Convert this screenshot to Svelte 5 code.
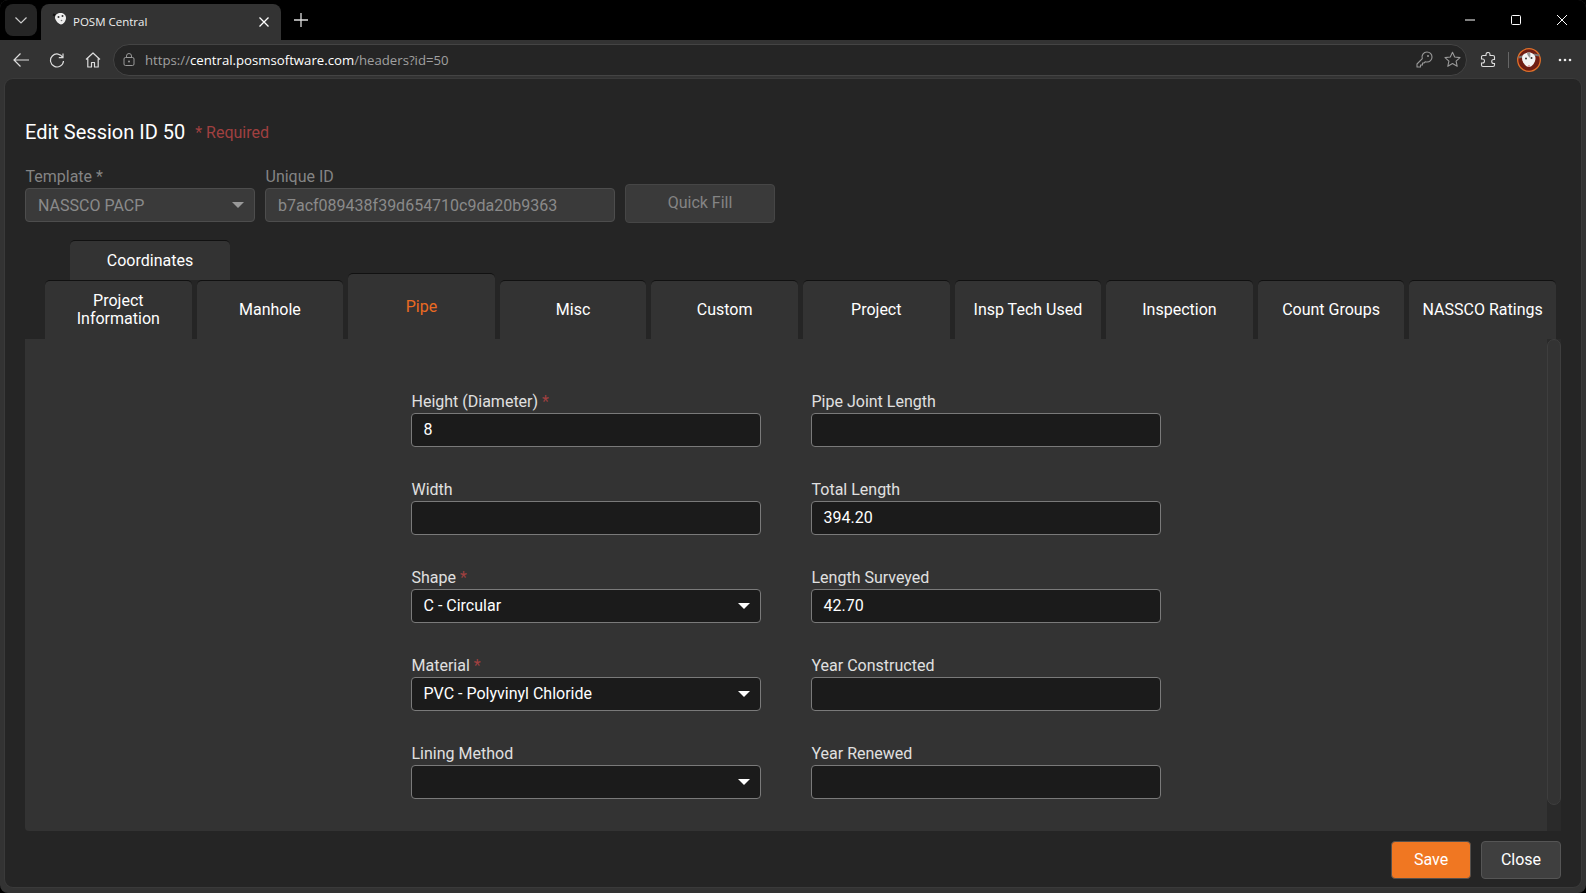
<script>
  const topTabs = ['Project Information', 'Manhole', 'Pipe', 'Misc', 'Custom', 'Project', 'Insp Tech Used', 'Inspection', 'Count Groups', 'NASSCO Ratings'];
  const fields = [
    { label: 'Height (Diameter)', req: true, value: '8' },
    { label: 'Pipe Joint Length', value: '' },
    { label: 'Width', value: '' },
    { label: 'Total Length', value: '394.20' },
    { label: 'Shape', req: true, value: 'C - Circular', select: true },
    { label: 'Length Surveyed', value: '42.70' },
    { label: 'Material', req: true, value: 'PVC - Polyvinyl Chloride', select: true },
    { label: 'Year Constructed', value: '' },
    { label: 'Lining Method', value: '', select: true },
    { label: 'Year Renewed', value: '' }
  ];
</script>

<div class="window">
  <div class="strip">
    <button class="group" aria-label="Tab actions">
      <svg width="14" height="14" viewBox="0 0 14 14"><path d="M1.5 4.5 7 10l5.5-5.5" class="ln" /></svg>
    </button>
    <div class="tab">
      <svg class="fav" width="16" height="16" viewBox="0 0 16 16">
        <path d="M1 2.500l4 1.500" stroke="#111" stroke-width="2" />
        <path d="M3 5.500C3 2.500 5.500 1 8.500 1S14 3 14 6c0 3-3 6.500-5 6.500S3 8.500 3 5.500Z" fill="#eee" />
        <circle cx="6.500" cy="5" r="1" fill="#333" /><circle cx="10.500" cy="4" r="1" fill="#333" /><circle cx="9.500" cy="8.500" r=".8" fill="#777" />
      </svg>
      <span class="tabtitle">POSM Central</span>
      <svg class="tabx" width="12" height="12" viewBox="0 0 12 12"><path d="M1.500 1.500l9 9m0-9l-9 9" stroke="#fff" stroke-width="1.300" fill="none" /></svg>
    </div>
    <svg class="plus" width="16" height="16" viewBox="0 0 16 16"><path d="M8 1v14M1 8h14" stroke="#ddd" stroke-width="1.300" fill="none" /></svg>
    <div class="winctl">
      <svg width="12" height="12" viewBox="0 0 12 12"><path d="M1 6h10" stroke="#fff" fill="none" /></svg>
      <svg width="12" height="12" viewBox="0 0 12 12"><rect x="1.500" y="1.500" width="9" height="9" rx="1" stroke="#fff" fill="none" /></svg>
      <svg width="12" height="12" viewBox="0 0 12 12"><path d="M1 1l10 10m0-10L1 11" stroke="#fff" fill="none" /></svg>
    </div>
  </div>

  <div class="toolbar">
    <div class="navbtn"><svg width="18" height="16" viewBox="0 0 18 16"><path d="M17 8H2M8.500 1.500 2 8l6.500 6.500" stroke="#ddd" stroke-width="1.200" fill="none" /></svg></div>
    <div class="navbtn"><svg width="16" height="16" viewBox="0 0 16 16"><path d="M13.800 5.500A6.500 6.500 0 1 0 14.500 9M14 1.500v4.200h-4.200" stroke="#ddd" stroke-width="1.200" fill="none" /></svg></div>
    <div class="navbtn"><svg width="16" height="16" viewBox="0 0 16 16"><path d="M1 7.500 8 1l7 6.500M2.800 6.500V15h3.700v-4.500h3V15h3.700V6.500" stroke="#ddd" stroke-width="1.200" fill="none" stroke-linejoin="round" /></svg></div>
    <div class="addr">
      <svg class="lock" width="12" height="13" viewBox="0 0 12 13"><rect x="1" y="4.500" width="10" height="8" rx="1.500" stroke="#999" fill="none" /><path d="M3.500 4.500V3a2.500 2.500 0 0 1 5 0v1.500" stroke="#999" fill="none" /><circle cx="6" cy="8.500" r="1" fill="#999" /></svg>
      <span class="url"><span class="dim">https://</span>central.posmsoftware.com<span class="dim">/headers?id=50</span></span>
      <svg class="key" width="17" height="17" viewBox="0 0 17 17"><path d="M11 1a5 5 0 0 1 0 10c-.6 0-1.100-.1-1.600-.3L8 12H6.500v2H4.500v2H1v-3l5.300-5.300A5 5 0 0 1 11 1Z" stroke="#999" stroke-width="1.100" fill="none" stroke-linejoin="round" /><circle cx="12" cy="5" r="1" fill="#999" /></svg>
      <svg class="star" width="17" height="17" viewBox="0 0 17 17"><path d="M8.500 1.200 10.700 6l5.300.6-3.900 3.500 1.100 5.200-4.700-2.700-4.700 2.700 1.100-5.200L1 6.600 6.300 6Z" stroke="#999" stroke-width="1.100" fill="none" stroke-linejoin="round" /></svg>
    </div>
    <div class="navbtn ext"><svg width="16" height="16" viewBox="0 0 16 16"><path d="M6 2.500a2 2 0 0 1 4 0V3.500h3a1.500 1.500 0 0 1 1.500 1.500v2.500h-.8a2 2 0 0 0 0 4h.8V13a1.500 1.500 0 0 1-1.500 1.500H3A1.500 1.500 0 0 1 1.500 13v-2h1a2 2 0 0 0 0-4h-1V5A1.500 1.500 0 0 1 3 3.500h3Z" stroke="#ddd" stroke-width="1.100" fill="none" /></svg></div>
    <span class="divider"></span>
    <svg class="avatar" width="24" height="24" viewBox="0 0 24 24">
      <circle cx="12" cy="12" r="11.300" fill="#6f1d13" stroke="#e0702a" stroke-width="1.300" />
      <path d="M1.500 9.500l6-1.500M22.500 7.500l-6-1" stroke="#777" stroke-width="2.200" />
      <path d="M5 10c0-3.500 3.500-5.500 7-5.500s6.500 2.500 6.500 5.500c0 4.500-3.500 9-6.500 9s-7-4.500-7-9Z" fill="#f4f4f4" />
      <path d="M10 5c.5 2 1 3.500 3 5 .5-2 .5-4 0-5.500Z" fill="#999" />
      <circle cx="9" cy="10.500" r="1" fill="#333" /><circle cx="14.500" cy="10" r="1" fill="#333" /><circle cx="12" cy="18" r="1" fill="#d99" />
    </svg>
    <svg class="dots" width="14" height="4" viewBox="0 0 14 4"><circle cx="2" cy="2" r="1.300" fill="#eee" /><circle cx="7" cy="2" r="1.300" fill="#eee" /><circle cx="12" cy="2" r="1.300" fill="#eee" /></svg>
  </div>

  <main class="page">
    <h1 class="title">Edit Session ID 50 <span class="required">* Required</span></h1>

    <div class="top-form">
      <div class="tf tf-template">
        <span class="tf-label">Template *</span>
        <div class="tf-box">NASSCO PACP<span class="caret off"></span></div>
      </div>
      <div class="tf tf-uid">
        <span class="tf-label">Unique ID</span>
        <div class="tf-box">b7acf089438f39d654710c9da20b9363</div>
      </div>
      <button class="quick">Quick Fill</button>
    </div>

    <div class="tabs-upper"><div class="t coord">Coordinates</div></div>
    <div class="tabs-lower">
      {#each topTabs as t}
        <div class="t" class:active={t === 'Pipe'}><span>{t}</span></div>
      {/each}
    </div>

    <section class="panel">
      <div class="panel-body">
        <div class="grid">
          {#each fields as f}
            <div class="field">
              <span class="flabel">{f.label}{#if f.req}<span class="star-req">*</span>{/if}</span>
              <div class="finput">{f.value}{#if f.select}<span class="caret"></span>{/if}</div>
            </div>
          {/each}
        </div>
      </div>
      <div class="track"><div class="thumb"></div></div>
    </section>

    <footer class="foot">
      <button class="btn save">Save</button>
      <button class="btn close">Close</button>
    </footer>
  </main>
</div>

<style>
  :global(body) { margin: 0; background: #000; }
  * { box-sizing: border-box; }
  .ln { stroke: #ccc; stroke-width: 1.2; fill: none; }
  .window { width: 1586px; height: 893px; background: #333; display: flex; flex-direction: column; overflow: hidden; font-family: Roboto, "Liberation Sans", sans-serif; border-radius: 8px; }
  .strip { height: 40px; background: #000; display: flex; padding: 4px 0 0 5px; flex: none; }
  .group { width: 32px; height: 32px; background: #252525; border: 0; border-radius: 8px; display: flex; align-items: center; justify-content: center; padding: 0; }
  .tab { margin-left: 4px; width: 240px; height: 36px; background: #333; border-radius: 8px 8px 0 0; display: flex; align-items: center; padding: 0 8px 0 11px; color: #eee; }
  .fav { margin-top: -4px; }
  .tabtitle { font: 11.500px "Open Sans", sans-serif; margin: -2px 0 0 5px; flex: 1; }
  .tabx { margin-right: 3px; }
  .plus { margin: 8px 0 0 12px; }
  .winctl { margin-left: auto; display: flex; gap: 34px; padding: 10px 18px 0 0; }
  .toolbar { height: 39px; flex: none; background: #333; display: flex; align-items: center; padding-left: 3px; }
  .navbtn { width: 36px; height: 32px; display: flex; align-items: center; justify-content: center; flex: none; }
  .addr { width: 1354px; height: 32px; margin-left: 2px; background: #252525; border: 1px solid #444; border-radius: 16px; display: flex; align-items: center; padding: 0 5px 0 9px; flex: none; }
  .lock { flex: none; }
  .url { font: 13.200px "Open Sans", sans-serif; color: #fff; margin-left: 10px; flex: 1; white-space: nowrap; }
  .dim { color: #a0a0a0; }
  .key { margin-right: 11px; }
  .ext { margin-left: 3px; }
  .divider { width: 1px; height: 16px; background: #666; flex: none; margin-left: 2px; }
  .avatar { margin-left: 8px; flex: none; }
  .dots { margin-left: 17px; flex: none; }

  .page { flex: 1; min-height: 0; margin: 0 5px 6px 5px; background: #252525; border-radius: 8px; padding: 0 20px; display: flex; flex-direction: column; box-shadow: 0 0 0 1px #3a3a3a; }
  .title { margin: 39px 0 0; height: 28px; font-size: 20px; font-weight: 400; line-height: 28px; color: #fff; white-space: nowrap; }
  .required { font-size: 16px; color: #a04040; margin-left: 5px; position: relative; top: -1px; }
  .top-form { margin-top: 20px; display: flex; align-items: flex-start; }
  .tf { display: flex; flex-direction: column; }
  .tf-template { width: 230px; }
  .tf-uid { width: 350px; margin-left: 10px; }
  .tf-label { height: 21px; margin-top: 1px; padding-left: .5px; font-size: 16px; line-height: 20px; color: #848484; }
  .tf-box { height: 34px; background: #3a3a3a; border: 1px solid #4d4d4d; border-radius: 4px; padding: 0 12px; font-size: 16px; line-height: 33px; color: #8a8a8a; position: relative; }
  .quick { margin: 18px 0 0 10px; width: 150px; height: 39px; background: #3a3a3a; border: 1px solid #464646; border-radius: 4px; color: #848484; font: 16px Roboto, sans-serif; padding: 0 0 2px; }
  .caret { position: absolute; right: 10px; top: 13px; width: 0; height: 0; border-left: 6px solid transparent; border-right: 6px solid transparent; border-top: 6px solid #fff; }
  .caret.off { border-top-color: #999; }

  .tabs-upper { margin: 17px 0 0 45px; height: 40px; display: flex; }
  .tabs-lower { height: 66px; margin: -7px 0 0 20px; display: flex; gap: 5px; align-items: flex-end; position: relative; }
  .t { width: 146.600px; height: 59px; background: #333; border-top: 1px solid #111; border-radius: 5px 5px 0 0; color: #fff; font-size: 16px; font-weight: 400; line-height: 18px; display: flex; align-items: center; justify-content: center; text-align: center; padding: 0 8px; flex: none; }
  .t span { white-space: normal; }
  .coord { width: 160px; height: 40px; }
  .t.active { height: 66px; color: #ea6a22; }

  .panel { flex: 1; min-height: 0; background: #333; border-radius: 0 0 4px 4px; display: flex; }
  .panel-body { flex: 1; padding: 52px 0 0 386px; }
  .grid { display: grid; grid-template-columns: 350px 350px; column-gap: 50px; row-gap: 32px; }
  .field { display: flex; flex-direction: column; }
  .flabel { height: 22px; padding-left: .5px; font-size: 16px; line-height: 22px; color: #e0e0e0; }
  .star-req { color: #a04040; margin-left: 4px; }
  .finput { height: 34px; background: #1b1b1b; border: 1px solid #7a7a7a; border-radius: 4px; padding: 0 11.500px; font-size: 16px; line-height: 31px; color: #fff; position: relative; }
  .track { width: 14px; background: #2a2a2a; flex: none; }
  .thumb { height: 466px; background: #333; border: 1px solid #3e3e3e; border-radius: 7px; }

  .foot { height: 56px; flex: none; display: flex; justify-content: flex-end; align-items: flex-start; gap: 10px; padding: 10px 0 0 0; }
  .btn { width: 80px; height: 38px; border-radius: 4px; font: 16px Roboto, sans-serif; color: #fff; padding: 0 0 2px; }
  .save { background: #f07722; border: 1px solid #55504c; }
  .close { background: #3f3f3f; border: 1px solid #555; }
</style>
